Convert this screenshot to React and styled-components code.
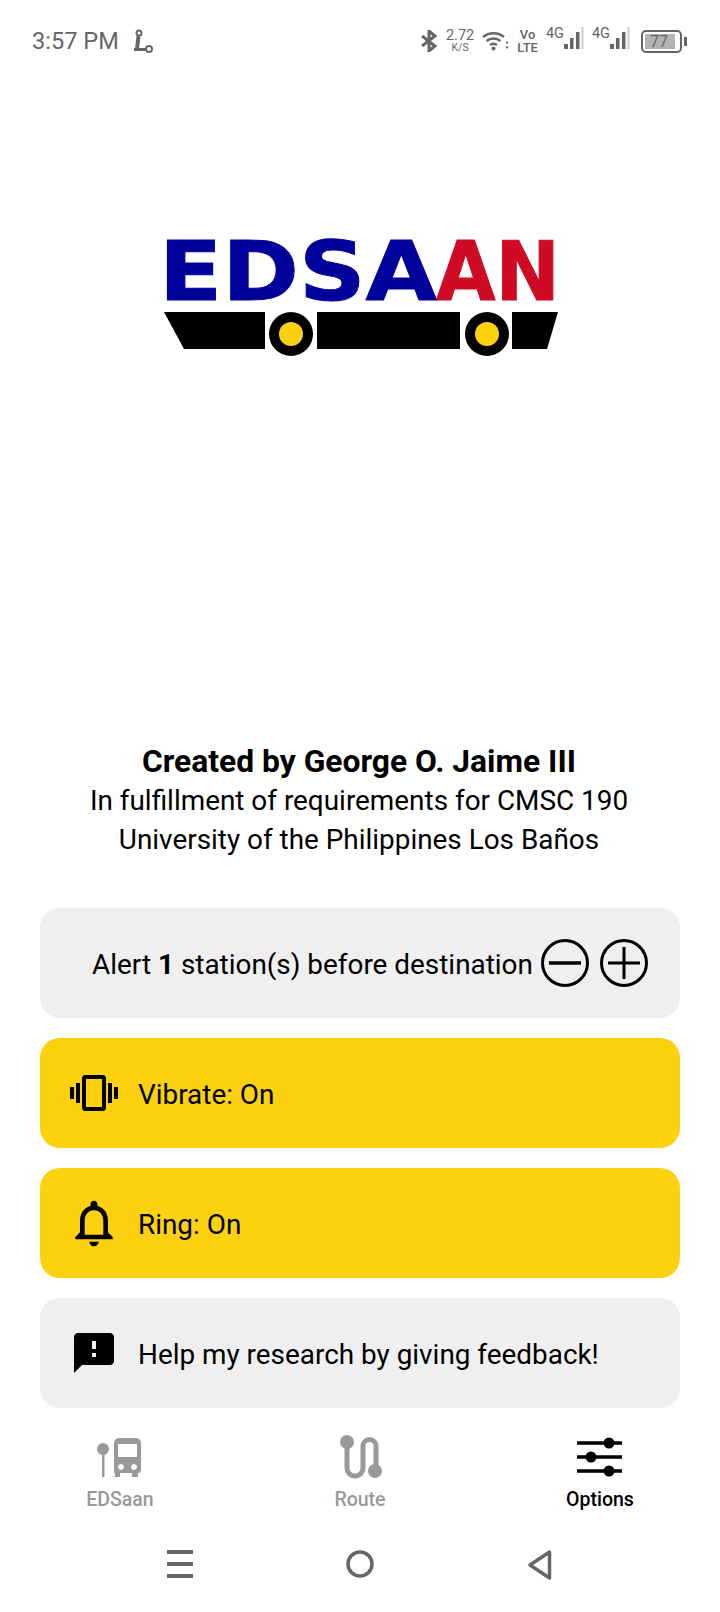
import React from 'react'
import styled, { createGlobalStyle } from 'styled-components'
import { MdVibration, MdNotificationsNone, MdFeedback } from 'react-icons/md'

const Global = createGlobalStyle`
html, body { margin: 0; padding: 0; background: #fff; }
* { box-sizing: border-box; }
body { font-family: Roboto, "Liberation Sans", sans-serif; color: #000; }
`
const Screen = styled.div`
width: 720px;
height: 1612px;
display: flex;
flex-direction: column;
overflow: hidden;
`
const StatusBar = styled.div`
height: 82px;
flex: none;
display: flex;
justify-content: space-between;
align-items: center;
padding: 0 38px 0 32px;
color: #666;
`
const StatusLeft = styled.div`
display: flex;
align-items: center;
gap: 13px;
font-size: 23.6px;
`
const StatusRight = styled.div`
display: flex;
align-items: center;
gap: 8px;
`
const Stacked = styled.div`
display: flex;
flex-direction: column;
align-items: center;
line-height: 1;
font-weight: ${p => p.$bold ? 500 : 400};
font-size: ${p => p.$size || 14.5}px;
span:last-child { font-size: ${p => p.$sub || 10.5}px; }
`
const Signal = styled.div`
display: flex;
align-items: flex-start;
font-size: 14.5px;
line-height: 1;
margin-top: -4px;
`
const Battery = styled.div`
width: 41px;
height: 23px;
border: 2px solid #666;
border-radius: 5px;
padding: 2px;
position: relative;
font-size: 16px;
line-height: 15px;
text-align: center;
margin-left: 3px;
&::after {
  content: '';
  position: absolute;
  right: -7px;
  top: 5px;
  width: 3px;
  height: 9px;
  background: #666;
}
`
const BatteryFill = styled.div`
width: 90%;
height: 15px;
background: #b3b3b3;
padding-left: 5px;
text-align: left;
white-space: nowrap;
`
const LogoArea = styled.div`
height: 659px;
flex: none;
padding: 140px 0 0 4px;
display: flex;
justify-content: center;
`
const Credits = styled.div`
height: 167px;
flex: none;
padding-right: 2px;
text-align: center;
font-size: 27.9px;
line-height: 39px;
h1 {
  margin: 0;
  font-size: 31.8px;
  font-weight: 700;
  line-height: 40px;
}
`
const Cards = styled.div`
display: flex;
flex-direction: column;
gap: 20px;
padding: 0 40px;
flex: none;
`
const Card = styled.div`
height: 110px;
border-radius: 20px;
background: ${p => p.$on ? '#fcd110' : '#efefef'};
display: flex;
align-items: center;
padding-left: ${p => p.$alert ? 52 : 30}px;
gap: 20px;
font-size: 27.9px;
`
const CardText = styled.div`
padding-top: 2px;
white-space: nowrap;
`
const IconSlot = styled.div`
width: 48px;
display: flex;
justify-content: center;
align-items: center;
flex: none;
svg { flex: none; }
`
const Stepper = styled.div`
display: flex;
gap: 11px;
margin-left: -12px;
`
const Tabs = styled.div`
height: 125px;
flex: none;
display: grid;
grid-template-columns: repeat(3, 240px);
`
const Tab = styled.div`
display: flex;
flex-direction: column;
align-items: center;
padding-top: 26px;
font-size: 19.5px;
font-weight: 500;
color: ${p => p.$active ? '#000' : '#999'};
svg { display: block; height: 46px; }
span { line-height: 22px; margin-top: 9px; }
`
const NavBar = styled.div`
flex: 1;
display: grid;
grid-template-columns: 60px 60px 60px;
column-gap: 120px;
padding: 17px 0 0 150px;
align-items: start;
`
const NavItem = styled.div`
display: flex;
justify-content: center;
`

const Bluetooth = () => (
  <svg width="18" height="22" viewBox="0 0 18 22" fill="none" stroke="#666" strokeWidth="3">
    <path d="M2 6l13 10-6 5V1l6 5L2 16" />
  </svg>
)
const Wifi = () => (
  <svg width="27" height="22" viewBox="0 0 27 22" fill="none" stroke="#666" strokeWidth="2.4">
    <path d="M1 7c6-5 15-5 21 0M4.500 11c4-3.300 10-3.300 14 0M8 15c2-1.500 5-1.500 7 0" />
    <circle cx="11.500" cy="18.500" r="2" fill="#666" stroke="none" />
    <path d="M25 11l1.700 2.500h-3.400zM25 19l-1.700-2.500h3.400z" fill="#666" stroke="none" />
  </svg>
)
const Bars = () => (
  <svg width="20" height="24" viewBox="0 0 20 24">
    <rect x="0" y="17" width="4" height="5" fill="#666" />
    <rect x="6" y="11" width="3.500" height="11" fill="#666" />
    <rect x="12" y="5" width="3.500" height="17" fill="#666" />
    <rect x="17.500" y="0" width="2" height="22" fill="#ccc" />
  </svg>
)
const RouteMark = () => (
  <svg width="22" height="24" viewBox="0 0 22 24" fill="none" stroke="#666">
    <circle cx="7" cy="4" r="2.500" strokeWidth="2" />
    <path d="M6.500 7L5 20" strokeWidth="4" />
    <path d="M2 20.500h13" strokeWidth="3" />
    <circle cx="17" cy="20" r="3" strokeWidth="2" fill="#fff" />
  </svg>
)
const Logo = () => (
  <svg width="396" height="142" viewBox="0 -20 396 142" overflow="visible">
    <g fontFamily="'DejaVu Sans', sans-serif" fontWeight="700" fontSize="82" stroke="currentColor" strokeWidth="1">
      <text x="-5" y="58" fill="#00009b" color="#00009b" textLength="278" lengthAdjust="spacingAndGlyphs">EDSA</text>
      <text x="272" y="58" fill="#cf0a25" color="#cf0a25" textLength="124" lengthAdjust="spacingAndGlyphs">AN</text>
    </g>
    <path d="M0 70h101v37H20z" />
    <path d="M153 70h143v37H153z" />
    <path d="M348 70h46l-11 37h-35z" />
    <circle cx="127" cy="92" r="22" />
    <circle cx="127" cy="92" r="12" fill="#fcd110" />
    <circle cx="323" cy="92" r="22" />
    <circle cx="323" cy="92" r="12" fill="#fcd110" />
  </svg>
)
const RoundButton = ({ plus }) => (
  <svg width="48" height="48" viewBox="0 0 48 48" fill="none" stroke="#000" strokeWidth="3">
    <circle cx="24" cy="24" r="22.500" />
    <path d={plus ? 'M8 24h32M24 8v32' : 'M8 24h32'} strokeWidth={plus ? 3 : 3.500} />
  </svg>
)
const BusStop = () => (
  <svg width="48" height="46" viewBox="0 0 48 46" fill="#999">
    <circle cx="7" cy="15" r="6" />
    <rect x="6" y="18" width="2.500" height="25" />
    <path d="M18 10c0-4 2-6 6-6h15c4 0 6 2 6 6v26c0 2-1 3-3 3v4h-6v-4H24v4h-5v-4c-1 0-1-2-1-3zM22 10v13h19V10zM25 30a3 3 0 1 0 .01 0zM38 30a3 3 0 1 0 .01 0z" fillRule="evenodd" />
  </svg>
)
const RouteIcon = () => (
  <svg width="44" height="46" viewBox="0 0 44 46" fill="none" stroke="#999" strokeWidth="5">
    <circle cx="9" cy="8" r="7" fill="#999" stroke="none" />
    <circle cx="37" cy="37" r="7" fill="#999" stroke="none" />
    <path d="M9 10v24a8 8 0 0 0 16 0V12a6.500 6.500 0 0 1 13 0v24" />
  </svg>
)
const Sliders = () => (
  <svg width="46" height="46" viewBox="0 0 46 46" fill="#000">
    <path d="M0 9h45M0 23h45M0 37h45" stroke="#000" strokeWidth="3.500" />
    <circle cx="32" cy="9" r="5.500" />
    <circle cx="14" cy="23" r="5.500" />
    <circle cx="32" cy="37" r="5.500" />
  </svg>
)

const App = () => {
  return (
    <Screen>
      <Global />
      <StatusBar>
        <StatusLeft>
          3:57 PM
          <RouteMark />
        </StatusLeft>
        <StatusRight>
          <Bluetooth />
          <Stacked><span>2.72</span><span>K/S</span></Stacked>
          <Wifi />
          <Stacked $bold $size={13} $sub={13}><span>Vo</span><span>LTE</span></Stacked>
          <Signal>4G<Bars /></Signal>
          <Signal>4G<Bars /></Signal>
          <Battery><BatteryFill>77</BatteryFill></Battery>
        </StatusRight>
      </StatusBar>
      <LogoArea>
        <Logo />
      </LogoArea>
      <Credits>
        <h1>Created by George O. Jaime III</h1>
        <div>In fulfillment of requirements for CMSC 190</div>
        <div>University of the Philippines Los Baños</div>
      </Credits>
      <Cards>
        <Card $alert>
          <CardText>Alert <b>1</b> station(s) before destination</CardText>
          <Stepper>
            <RoundButton />
            <RoundButton plus />
          </Stepper>
        </Card>
        <Card $on>
          <IconSlot><MdVibration size={48} /></IconSlot>
          <CardText>Vibrate: On</CardText>
        </Card>
        <Card $on>
          <IconSlot><MdNotificationsNone size={56} /></IconSlot>
          <CardText>Ring: On</CardText>
        </Card>
        <Card>
          <IconSlot><MdFeedback size={48} /></IconSlot>
          <CardText>Help my research by giving feedback!</CardText>
        </Card>
      </Cards>
      <Tabs>
        <Tab><BusStop /><span>EDSaan</span></Tab>
        <Tab><RouteIcon /><span>Route</span></Tab>
        <Tab $active><Sliders /><span>Options</span></Tab>
      </Tabs>
      <NavBar>
        <NavItem>
          <svg width="26" height="28" viewBox="0 0 26 28" fill="#666">
            <rect width="26" height="4" />
            <rect y="12" width="26" height="4" />
            <rect y="24" width="26" height="4" />
          </svg>
        </NavItem>
        <NavItem>
          <svg width="28" height="28" viewBox="0 0 28 28" fill="none" stroke="#666" strokeWidth="3.500">
            <circle cx="14" cy="14" r="12" />
          </svg>
        </NavItem>
        <NavItem>
          <svg width="24" height="30" viewBox="0 0 24 30" fill="none" stroke="#666" strokeWidth="3.500" strokeLinejoin="round">
            <path d="M21.500 2L2 15l19.500 13z" />
          </svg>
        </NavItem>
      </NavBar>
    </Screen>
  )
}

export default App
